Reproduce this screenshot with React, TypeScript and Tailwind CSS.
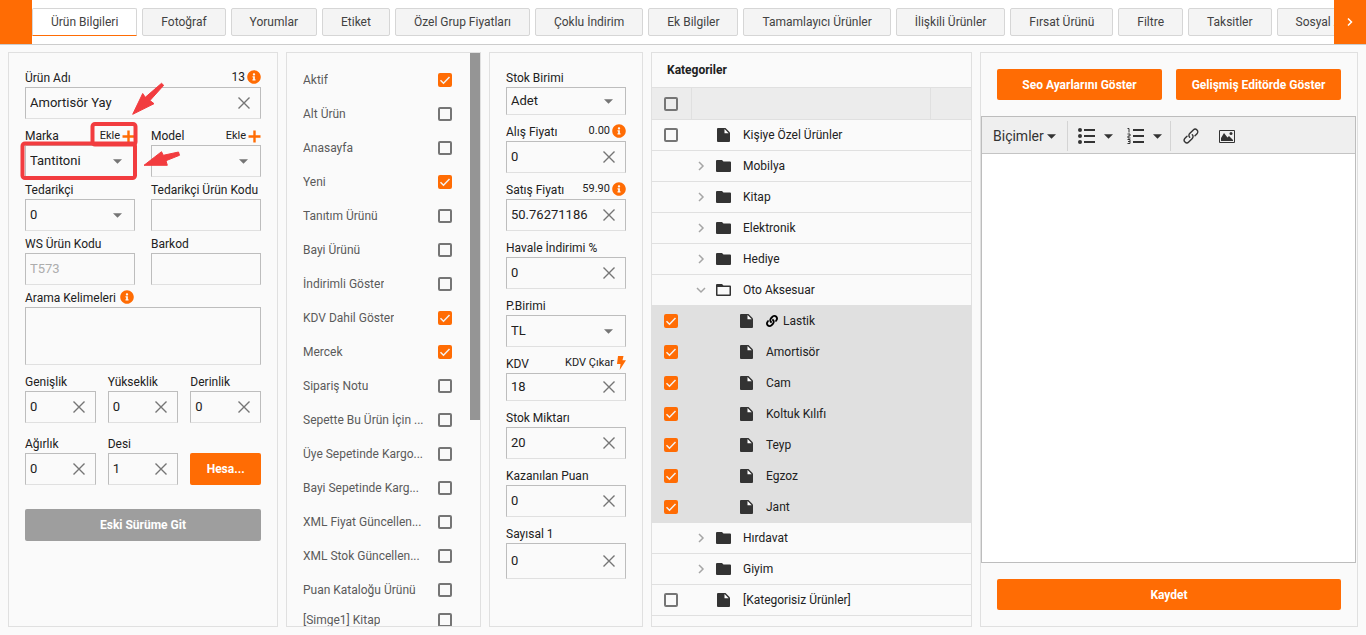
import React, { useState } from 'react';
import { FaInfoCircle, FaLink } from 'react-icons/fa';

const tabs = [
    'Ürün Bilgileri', 'Fotoğraf', 'Yorumlar', 'Etiket', 'Özel Grup Fiyatları', 'Çoklu İndirim', 'Ek Bilgiler',
    'Tamamlayıcı Ürünler', 'İlişkili Ürünler', 'Fırsat Ürünü', 'Filtre', 'Taksitler', 'Sosyal Ağ',
];

const flags: [string, boolean][] = [
    ['Aktif', true],
    ['Alt Ürün', false],
    ['Anasayfa', false],
    ['Yeni', true],
    ['Tanıtım Ürünü', false],
    ['Bayi Ürünü', false],
    ['İndirimli Göster', false],
    ['KDV Dahil Göster', true],
    ['Mercek', true],
    ['Sipariş Notu', false],
    ['Sepette Bu Ürün İçin ...', false],
    ['Üye Sepetinde Kargo...', false],
    ['Bayi Sepetinde Karg...', false],
    ['XML Fiyat Güncellen...', false],
    ['XML Stok Güncellen...', false],
    ['Puan Kataloğu Ürünü', false],
    ['[Simge1] Kitap', false],
];

type Category = { name: string; kind: 'file' | 'folder' | 'open' | 'child'; linked?: boolean };

const categories: Category[] = [
    { name: 'Kişiye Özel Ürünler', kind: 'file' },
    { name: 'Mobilya', kind: 'folder' },
    { name: 'Kitap', kind: 'folder' },
    { name: 'Elektronik', kind: 'folder' },
    { name: 'Hediye', kind: 'folder' },
    { name: 'Oto Aksesuar', kind: 'open' },
    { name: 'Lastik', kind: 'child', linked: true },
    { name: 'Amortisör', kind: 'child' },
    { name: 'Cam', kind: 'child' },
    { name: 'Koltuk Kılıfı', kind: 'child' },
    { name: 'Teyp', kind: 'child' },
    { name: 'Egzoz', kind: 'child' },
    { name: 'Jant', kind: 'child' },
    { name: 'Hırdavat', kind: 'folder' },
    { name: 'Giyim', kind: 'folder' },
    { name: '[Kategorisiz Ürünler]', kind: 'file' },
];

const Caret = ({ className = '' }: { className?: string }) => (
    <svg viewBox="0 0 10 5" className={`h-[5px] w-[9px] shrink-0 ${className}`} aria-hidden="true">
        <path d="M0 0h10L5 5z" fill="currentColor" />
    </svg>
);

const Plus = () => (
    <svg viewBox="0 0 13 13" className="size-[13px] text-[#ff6c04]" aria-hidden="true">
        <path d="M6.5 0.5v12M0.5 6.5h12" stroke="currentColor" strokeWidth="2.4" />
    </svg>
);

const Bolt = () => (
    <svg viewBox="0 0 9 14" className="h-[14px] w-[9px] text-[#ff6c04]" aria-hidden="true">
        <path d="M1 0h5.500L5.500 4.300H9L2.700 14 3.500 8H0z" fill="currentColor" />
    </svg>
);

const Chevron = ({ down = false }: { down?: boolean }) => (
    <svg viewBox="0 0 10 10" className="size-[10px]" fill="none" stroke="#a6a6a6" strokeWidth="1.5" aria-hidden="true">
        <path d={down ? 'M1 3l4 4 4-4' : 'M3 1l4 4-4 4'} />
    </svg>
);

const FileIcon = () => (
    <svg viewBox="0 0 13 14" className="h-[14px] w-[13px] shrink-0" aria-hidden="true">
        <path d="M1 0h7.500L13 4.500V13a1 1 0 0 1-1 1H1a1 1 0 0 1-1-1V1a1 1 0 0 1 1-1z" fill="#333" />
        <path d="M7.500 1v4.200h4.200z" fill="#fff" />
    </svg>
);

const FolderIcon = ({ open = false }: { open?: boolean }) => (
    <svg viewBox="0 0 15 12" className="h-3 w-[15px] shrink-0" aria-hidden="true">
        <path d="M1 0h5l1.5 1.5H14a1 1 0 0 1 1 1V11a1 1 0 0 1-1 1H1a1 1 0 0 1-1-1V1a1 1 0 0 1 1-1z" fill="#333" />
        {open && <path d="M1.5 3h12v7.5h-12z" fill="#fafafa" />}
    </svg>
);

const Checkbox = ({ label, id, on = false }: { label?: string; id?: string; on?: boolean }) => {
    const [checked, setChecked] = useState(on);
    return (
        <span className="grid size-[14px] shrink-0">
            <input
                type="checkbox"
                id={id}
                aria-label={label}
                checked={checked}
                onChange={(e) => setChecked(e.target.checked)}
                className="col-start-1 row-start-1 size-[14px] appearance-none rounded-[2px] border-2 border-[#757575] checked:border-[#ff6c04] checked:bg-[#ff6c04]"
            />
            {checked && (
                <svg viewBox="0 0 14 14" className="pointer-events-none col-start-1 row-start-1 size-[14px]" fill="none" aria-hidden="true">
                    <path d="M2.5 7.2l3 3 6-6.2" stroke="#f2f2f2" strokeWidth="1.5" />
                </svg>
            )}
        </span>
    );
};

const box = 'border border-[#bdbdbd] border-b-[#e0e0e0] bg-[#fafafa]';

type FieldProps = {
    id: string;
    label: string;
    value?: string;
    kind?: 'clear' | 'plain' | 'select' | 'disabled';
    height?: string;
    extra?: React.ReactNode;
};

const Field: React.FC<FieldProps> = ({ id, label, value = '', kind = 'clear', height = 'h-8', extra }) => {
    const [text, setText] = useState(value);
    return (
        <div className="min-w-0">
            <div className="flex h-[18px] items-start justify-between text-xs leading-[18px] text-[#212121]">
                <label htmlFor={id} className="whitespace-nowrap">{label}</label>
                {extra}
            </div>
            <div className={`flex items-center text-[13px] text-[#212121] ${box} ${height}`}>
                {kind === 'select' ? (
                    <>
                        <select id={id} className="-mr-5 h-full w-full min-w-0 appearance-none bg-transparent pr-5 pl-1 outline-none">
                            <option>{value}</option>
                        </select>
                        <Caret className="pointer-events-none mr-3 text-[#757575]" />
                    </>
                ) : (
                    <input
                        id={id}
                        value={text}
                        disabled={kind === 'disabled'}
                        onChange={(e) => setText(e.target.value)}
                        className="h-full w-full min-w-0 bg-transparent pb-0.5 pl-1 outline-none disabled:text-[#adadad]"
                    />
                )}
                {kind === 'clear' && (
                    <button type="button" aria-label={`${label} temizle`} onClick={() => setText('')} className="mr-[10px] shrink-0 text-[#757575]">
                        <svg viewBox="0 0 12 12" className="size-3" aria-hidden="true">
                            <path d="M0.5 0.5l11 11M11.5 0.5l-11 11" stroke="currentColor" strokeWidth="1.4" />
                        </svg>
                    </button>
                )}
            </div>
        </div>
    );
};

const Info = ({ text }: { text?: string }) => (
    <span className="flex h-4 items-center gap-0.5">
        {text}
        <FaInfoCircle className="size-[14px] text-[#ff6c04]" />
    </span>
);

const AddLink = () => (
    <a href="#ekle" className="flex items-center gap-0.5 text-[11px]">
        Ekle
        <Plus />
    </a>
);

const Button = ({ children, className = '' }: { children: React.ReactNode; className?: string }) => (
    <button type="button" className={`truncate rounded-[2px] text-xs font-bold text-white ${className}`}>
        {children}
    </button>
);

const panel = 'min-h-0 min-w-0 border border-[#e0e0e0] bg-[#fafafa]';

// Red marks that point the reader at the brand field
const Callouts = () => (
    <svg className="pointer-events-none absolute top-0 left-0 h-[140px] w-[180px]" viewBox="9 53 180 140" fill="none" aria-hidden="true">
        <rect x="92.5" y="124" width="43" height="20.500" rx="2.500" stroke="#f23c3f" strokeWidth="4" />
        <rect x="22.500" y="143.500" width="112.500" height="34.500" rx="2.500" stroke="#f23c3f" strokeWidth="4" />
        <g fill="#f23c3f" stroke="#f23c3f" strokeLinejoin="round">
            <path d="M132.700 114.300L142.700 93.500 145.300 97.300 161.500 83.300 163.700 85.300 150 100.500 154 103.700z" />
            <path d="M144 165.300L161.500 151.700 163.300 155.300 178.500 152 179.500 155.300 166 160.700 167.300 165.300z" />
        </g>
    </svg>
);

const Header = () => (
    <header className="flex h-[45px] shrink-0 border-b border-[#ccc] bg-white">
        <div className="w-8 shrink-0 bg-[#ff6c04]" />
        <nav className="flex min-w-0 flex-1 items-center gap-[5px] overflow-hidden">
            {tabs.map((tab, i) => (
                <button
                    key={tab}
                    type="button"
                    className={`h-7 shrink-0 border px-[18px] text-xs whitespace-nowrap text-[#424242] ${
                        i === 0
                            ? 'rounded-t-[2px] border-x-[#d6d6d6] border-t-[#d6d6d6] border-b-[#ff6c04] bg-white'
                            : 'rounded-[2px] border-[#d6d6d6] bg-[#f4f4f4]'
                    }`}
                >
                    {tab}
                </button>
            ))}
        </nav>
        <button type="button" aria-label="Sonraki sekmeler" className="flex w-8 shrink-0 items-center justify-center bg-[#ff6c04]">
            <svg viewBox="0 0 6 8" className="h-2 w-[6px]" fill="none" aria-hidden="true">
                <path d="M1 0.500l3.500 3.500L1 7.500" stroke="#fff" strokeWidth="1.500" />
            </svg>
        </button>
    </header>
);

const ProductPanel = () => (
    <section className={`relative px-4 pt-4 ${panel}`}>
        <Field id="name" label="Ürün Adı" value="Amortisör Yay" extra={<Info text="13" />} />
        <div className="mt-2 grid grid-cols-2 gap-x-4 gap-y-1">
            <Field id="brand" label="Marka" value="Tantitoni" kind="select" extra={<AddLink />} />
            <Field id="model" label="Model" kind="select" extra={<AddLink />} />
            <Field id="supplier" label="Tedarikçi" value="0" kind="select" />
            <Field id="supplierCode" label="Tedarikçi Ürün Kodu" kind="plain" />
            <Field id="wsCode" label="WS Ürün Kodu" value="T573" kind="disabled" />
            <Field id="barcode" label="Barkod" kind="plain" />
        </div>
        <div className="mt-1 flex h-[18px] items-start gap-1 text-xs leading-[18px] text-[#212121]">
            <label htmlFor="keywords">Arama Kelimeleri</label>
            <Info />
        </div>
        <textarea id="keywords" className={`block h-[58px] w-full resize-none outline-none ${box}`} />
        <div className="mt-2 grid grid-cols-3 items-end gap-x-3 gap-y-3">
            <Field id="width" label="Genişlik" value="0" />
            <Field id="height" label="Yükseklik" value="0" />
            <Field id="depth" label="Derinlik" value="0" />
            <Field id="weight" label="Ağırlık" value="0" />
            <Field id="desi" label="Desi" value="1" />
            <Button className="h-8 bg-[#ff6c04]">Hesa...</Button>
        </div>
        <Button className="mt-6 h-8 w-full bg-[#9e9e9e]">Eski Sürüme Git</Button>
        <Callouts />
    </section>
);

const FlagsPanel = () => (
    <section className={`flex overflow-hidden ${panel}`}>
        <ul className="min-w-0 flex-1 pt-[10px] pr-[18px] pl-4">
            {flags.map(([name, on], i) => (
                <li key={name} className="flex h-[34px] items-center justify-between text-xs text-[#5a5a5a] last:h-[26px]">
                    <label htmlFor={`flag-${i}`} className="truncate">{name}</label>
                    <Checkbox id={`flag-${i}`} on={on} />
                </li>
            ))}
        </ul>
        <div className="h-[64%] w-[10px] shrink-0 bg-[#959595]" />
    </section>
);

const PricePanel = () => (
    <section className={`flex flex-col gap-2 px-4 pt-4 ${panel}`}>
        <Field id="unit" label="Stok Birimi" value="Adet" kind="select" height="h-7" />
        <Field id="buy" label="Alış Fiyatı" value="0" extra={<span className="text-[11px]"><Info text="0.00" /></span>} />
        <Field id="sell" label="Satış Fiyatı" value="50.76271186" extra={<span className="text-[11px]"><Info text="59.90" /></span>} />
        <Field id="transfer" label="Havale İndirimi %" value="0" />
        <Field id="currency" label="P.Birimi" value="TL" kind="select" />
        <Field
            id="vat"
            label="KDV"
            value="18"
            height="h-7"
            extra={
                <a href="#kdv" className="flex h-4 items-center gap-[3px] text-[11px]">
                    KDV Çıkar
                    <Bolt />
                </a>
            }
        />
        <Field id="stock" label="Stok Miktarı" value="20" />
        <Field id="points" label="Kazanılan Puan" value="0" />
        <Field id="numeric" label="Sayısal 1" value="0" height="h-9" />
    </section>
);

const CategoryPanel = () => (
    <section className={`overflow-hidden ${panel}`}>
        <h2 className="h-[34px] px-[15px] text-xs leading-[34px] font-bold text-[#212121]">Kategoriler</h2>
        <table className="w-full table-fixed border-separate border-spacing-0 text-xs text-[#212121]">
            <thead className="bg-[#ececec]">
                <tr className="h-[33px]">
                    <th className="w-10 border-y border-r border-[#e0e0e0] pl-3"><Checkbox label="Tümünü seç" /></th>
                    <th className="border-y border-r border-[#e0e0e0]" />
                    <th className="w-10 border-y border-[#e0e0e0]" />
                </tr>
            </thead>
            <tbody>
                {categories.map(({ name, kind, linked }) => {
                    const child = kind === 'child';
                    return (
                        <tr key={name} className={`h-[31px] ${child ? 'bg-[#e0e0e0]' : ''}`}>
                            <td className="border-b border-[#e0e0e0] pl-3">
                                {(child || kind === 'file') && <Checkbox label={name} on={child} />}
                            </td>
                            <td colSpan={2} className="border-b border-[#e0e0e0]">
                                <div className={`flex items-center ${child ? 'pl-[47px]' : 'pl-1'}`}>
                                    {!child && (
                                        <span className="mr-[10px] w-[10px]">
                                            {kind !== 'file' && <Chevron down={kind === 'open'} />}
                                        </span>
                                    )}
                                    <span className="mr-3 flex w-[15px] justify-center">
                                        {child || kind === 'file' ? <FileIcon /> : <FolderIcon open={kind === 'open'} />}
                                    </span>
                                    {linked && <FaLink className="mr-[5px] size-3 text-black" />}
                                    {name}
                                </div>
                            </td>
                        </tr>
                    );
                })}
            </tbody>
        </table>
    </section>
);

const EditorPanel = () => (
    <section className={`flex flex-col ${panel}`}>
        <div className="grid grid-cols-2 gap-[14px] p-4">
            <Button className="h-[31px] bg-[#ff6c04]">Seo Ayarlarını Göster</Button>
            <Button className="h-[31px] bg-[#ff6c04]">Gelişmiş Editörde Göster</Button>
        </div>
        <div className="mr-px flex min-h-0 flex-1 flex-col border border-[#bdbdbd] bg-white">
            <div className="flex h-[37px] shrink-0 items-center border-b border-[#c4c4c4] bg-[#efefef] pt-0.5 text-[#333]">
                <button type="button" className="flex items-center gap-[3px] pl-[11px] text-sm">
                    Biçimler
                    <Caret />
                </button>
                <span className="ml-[11px] h-[30px] w-px bg-[#d4d4d4]" />
                <button type="button" aria-label="Madde işaretli liste" className="ml-[10px] flex items-center gap-[9px]">
                    <svg viewBox="0 0 17 16" className="h-4 w-[17px]" aria-hidden="true">
                        <path d="M6 2h11M6 8h11M6 14h11" stroke="currentColor" strokeWidth="2" />
                        <circle cx="2" cy="2" r="2" fill="currentColor" />
                        <circle cx="2" cy="8" r="2" fill="currentColor" />
                        <circle cx="2" cy="14" r="2" fill="currentColor" />
                    </svg>
                    <Caret />
                </button>
                <button type="button" aria-label="Numaralı liste" className="ml-[14px] flex items-center gap-[9px]">
                    <svg viewBox="0 0 17 16" className="h-4 w-[17px]" fill="none" stroke="currentColor" aria-hidden="true">
                        <path d="M6 2h11M6 8h11M6 14h11" strokeWidth="2" />
                        <path d="M0.500 0.500H2V4.500M0.500 6H3V8H1V10H3.500M0.500 11.500H3V15.500H0.500M1 13.500H3" />
                    </svg>
                    <Caret />
                </button>
                <span className="ml-2 h-[30px] w-px bg-[#d4d4d4]" />
                <button type="button" aria-label="Bağlantı" className="ml-3">
                    <svg viewBox="0 0 16 16" className="size-4" fill="none" stroke="currentColor" strokeWidth="1.400" strokeLinecap="round" aria-hidden="true">
                        <path d="M6.700 9.300a2.600 2.600 0 0 1 0-3.700l3.600-3.600a2.500 2.500 0 0 1 3.700 3.700l-2 2" />
                        <path d="M9.300 6.700a2.600 2.600 0 0 1 0 3.700l-3.600 3.600a2.500 2.500 0 0 1-3.700-3.700l2-2" />
                    </svg>
                </button>
                <button type="button" aria-label="Resim" className="ml-5">
                    <svg viewBox="0 0 16 13" className="h-[13px] w-4" aria-hidden="true">
                        <path d="M0.500 0.500h15v12h-15z" fill="none" stroke="currentColor" />
                        <path d="M2 11V8l3-5 3.500 4.500L10 6l4 4v1z" fill="currentColor" />
                        <circle cx="12" cy="3.500" r="1.500" fill="currentColor" />
                    </svg>
                </button>
            </div>
            <textarea aria-label="Ürün açıklaması" className="w-full flex-1 resize-none bg-white p-2 text-sm outline-none" />
        </div>
        <div className="flex p-4">
            <Button className="h-[31px] flex-1 bg-[#ff6c04]">Kaydet</Button>
        </div>
    </section>
);

const App: React.FC = () => (
    <div className="flex h-screen flex-col bg-[#fafafa] font-[Roboto,sans-serif]">
        <Header />
        <main className="grid min-h-0 flex-1 grid-cols-[270fr_195fr_154fr_321fr_378fr] grid-rows-[minmax(0,1fr)] gap-2 px-2 pt-[7px] pb-2">
            <ProductPanel />
            <FlagsPanel />
            <PricePanel />
            <CategoryPanel />
            <EditorPanel />
        </main>
    </div>
);

export default App;
